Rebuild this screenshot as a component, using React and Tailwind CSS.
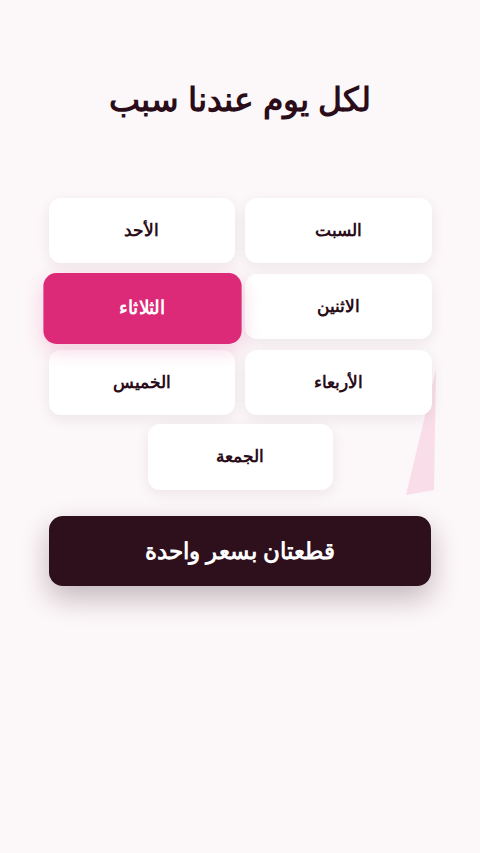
import React from "react";

const days = [
	{ name: "السبت" },
	{ name: "الأحد" },
	{ name: "الاثنين" },
	{ name: "الثلاثاء", active: true },
	{ name: "الأربعاء" },
	{ name: "الخميس" },
];

const App = () => {
	return (
		<div
			dir="rtl"
			className="relative min-h-[853px] w-full overflow-hidden bg-[#fcf7f9] text-[#2a0d19]"
			style={{ fontFamily: '"Liberation Sans", Arial, sans-serif' }}
		>
			{/* faint shape from the flip animation */}
			<svg
				className="absolute left-[400px] top-[370px]"
				width="40"
				height="130"
				viewBox="0 0 40 130"
			>
				<polygon points="36,0 34,120 6,125" fill="#f8d7e6" opacity="0.8" />
			</svg>

			<h1 className="pt-[78px] text-center text-[33px] font-bold leading-[44px]">
				لكل يوم عندنا سبب
			</h1>

			<div className="relative mx-auto mt-[76px] w-[383px]">
				<div className="grid grid-cols-2 gap-x-[10px] gap-y-[11px]">
					{days.map((d) =>
						d.active ? (
							<div
								key={d.name}
								className="flex h-[65px] translate-y-[2px] scale-x-[1.06] scale-y-[1.09] items-center justify-center rounded-[12px] bg-[#dc2a78] text-[17px] font-bold text-white shadow-[0_6px_18px_rgba(220,42,120,0.2)]"
							>
								{d.name}
							</div>
						) : (
							<div
								key={d.name}
								className="flex h-[65px] items-center justify-center rounded-[12px] bg-white text-[17px] font-bold shadow-[0_4px_14px_rgba(60,20,40,0.08)]"
							>
								{d.name}
							</div>
						)
					)}
				</div>
				<div className="mt-[9px] flex justify-center">
					<div className="flex h-[66px] w-[185px] items-center justify-center rounded-[12px] bg-white text-[17px] font-bold shadow-[0_4px_14px_rgba(60,20,40,0.08)]">
						الجمعة
					</div>
				</div>
			</div>

			<div className="mx-auto mt-[26px] flex h-[70px] w-[382px] items-center justify-center rounded-[14px] bg-[#2e0f1c] text-[23px] font-bold text-white shadow-[0_12px_28px_rgba(46,15,28,0.28)]">
				قطعتان بسعر واحدة
			</div>
		</div>
	);
};

export default App;
